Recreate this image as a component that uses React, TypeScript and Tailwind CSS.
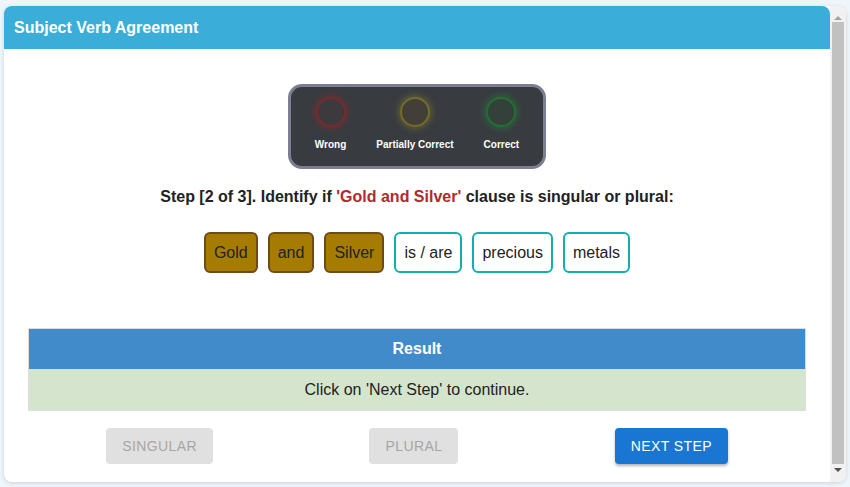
const words = [
  { text: "Gold", clause: true },
  { text: "and", clause: true },
  { text: "Silver", clause: true },
  { text: "is / are", clause: false },
  { text: "precious", clause: false },
  { text: "metals", clause: false },
];

const lights = [
  { label: "Wrong", ring: "border-[#7a2a2e] shadow-[0_0_6px_2px_rgba(150,40,45,0.45)] bg-[#3c3a3d]" },
  { label: "Partially Correct", ring: "border-[#726b2a] shadow-[0_0_6px_2px_rgba(150,140,40,0.4)] bg-[#413f38]" },
  { label: "Correct", ring: "border-[#22702f] shadow-[0_0_6px_2px_rgba(40,140,60,0.45)] bg-[#34403a]" },
];

function Scrollbar() {
  return (
    <div className="w-[16px] bg-[#f1f1f1] flex flex-col items-center">
      <div className="h-[14px] flex items-end justify-center">
        <div className="w-0 h-0 border-l-[4px] border-r-[4px] border-b-[4px] border-l-transparent border-r-transparent border-b-[#a3a3a3]" />
      </div>
      <div className="flex-1 w-[12px] bg-[#c1c1c1] mt-[2px] mb-[4px]" />
      <div className="h-[14px] flex items-start justify-center">
        <div className="w-0 h-0 border-l-[4px] border-r-[4px] border-t-[4px] border-l-transparent border-r-transparent border-t-[#505050]" />
      </div>
    </div>
  );
}

export default function App() {
  return (
    <div className="w-[850px] h-[487px] bg-[#eef6fb] pt-[6px] pl-[4px] font-['Liberation_Sans',Arial,sans-serif]">
      <div className="w-[842px] h-[476px] bg-white rounded-lg overflow-hidden flex shadow-[0_1px_4px_rgba(0,0,0,0.15)]">
        <div className="flex-1 flex flex-col">
          <header className="h-[43px] bg-[#3aaed8] rounded-tr-lg flex items-center pl-[10px]">
            <h1 className="text-white font-bold text-[16px]">Subject Verb Agreement</h1>
          </header>

          <div className="flex justify-center mt-[35px]">
            <div className="w-[258px] h-[85px] bg-[#383c40] border-[3px] border-[#7c7f91] rounded-[14px] flex justify-center gap-[30px] pt-[10px]">
              {lights.map((l) => (
                <div key={l.label} className="flex flex-col items-center">
                  <div className={`w-[30px] h-[30px] rounded-full border-2 ${l.ring}`} />
                  <span className="text-white font-bold text-[10px] mt-[11px] leading-[14px]">{l.label}</span>
                </div>
              ))}
            </div>
          </div>

          <p className="text-center font-bold text-[16px] text-[#222] mt-[19px] leading-[18px]">
            Step [2 of 3]. Identify if <span className="text-[#b22a2a]">'Gold and Silver'</span> clause is singular or plural:
          </p>

          <div className="flex justify-center gap-[10px] mt-[26px]">
            {words.map((w) => (
              <div
                key={w.text}
                className={
                  w.clause
                    ? "h-[41px] px-[8px] flex items-center rounded-[6px] border-2 border-[#6e4a1c] bg-[#a67c00] text-[#222] text-[16px]"
                    : "h-[41px] px-[8px] flex items-center rounded-[6px] border-2 border-[#10b0ab] bg-white text-[#222] text-[16px]"
                }
              >
                {w.text}
              </div>
            ))}
          </div>

          <div className="mx-[24px] mt-[55px] border border-[#dddddd]">
            <div className="h-[40px] bg-[#428bca] flex items-center justify-center text-white font-bold text-[16px]">
              Result
            </div>
            <div className="h-[41px] bg-[#d5e5cd] flex items-center justify-center text-[#222] text-[16px]">
              Click on 'Next Step' to continue.
            </div>
          </div>

          <div className="mx-[24px] mt-[17px] flex justify-around">
            <button className="h-[36px] w-[107px] rounded-[4px] bg-[#e0e0e0] text-[#a6a6a6] text-[14px] tracking-[0.4px]">
              SINGULAR
            </button>
            <button className="h-[36px] w-[89px] rounded-[4px] bg-[#e0e0e0] text-[#a6a6a6] text-[14px] tracking-[0.4px]">
              PLURAL
            </button>
            <button className="h-[36px] w-[113px] rounded-[4px] bg-[#1976d2] text-white text-[14px] tracking-[0.4px] shadow-[0_2px_3px_rgba(0,0,0,0.3)]">
              NEXT STEP
            </button>
          </div>
        </div>
        <Scrollbar />
      </div>
    </div>
  );
}
